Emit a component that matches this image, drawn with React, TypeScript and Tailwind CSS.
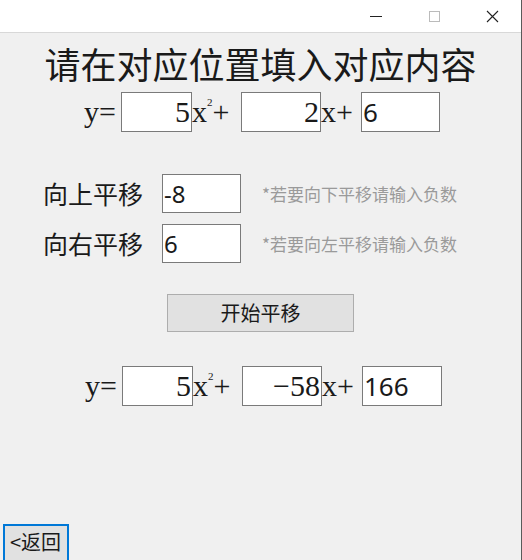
import React from "react";

const serif = "font-['Liberation_Serif',serif]";
const cjk = "font-['Noto_Sans_CJK_SC',sans-serif]";

const Box = ({
  value,
  w,
  h = "h-[40px]",
  align = "left",
  kind = "sans",
}: {
  value: string;
  w: string;
  h?: string;
  align?: "left" | "right";
  kind?: "sans" | "serif";
}) => (
  <div
    className={`${w} ${h} shrink-0 bg-white border border-[#7a7a7a] flex items-center overflow-hidden ${
      align === "right" ? "justify-end pr-[1px]" : "justify-start pl-[1px]"
    } ${
      kind === "serif"
        ? "font-['Liberation_Serif',serif] text-[30px]"
        : "font-['Noto_Sans',sans-serif] text-[26px]"
    } text-[#1a1a1a] leading-none`}
  >
    {value}
  </div>
);

const Equation = ({
  a,
  b,
  c,
  start,
  box3,
}: {
  a: string;
  b: string;
  c: string;
  start: string;
  box3: string;
}) => (
  <div className={`flex items-center h-[40px] ${start} ${serif} text-[30px] text-[#1a1a1a] leading-none`}>
    <span className="w-[37px] shrink-0">y=</span>
    <Box value={a} w="w-[71px]" align="right" kind="serif" />
    <span className="w-[49px] shrink-0 flex items-center">
      <span>x</span>
      <span className="relative -top-[10px] text-[11px] leading-none">2</span>
      <span>+</span>
    </span>
    <Box value={b} w="w-[80px]" align="right" kind="serif" />
    <span className="w-[40px] shrink-0">x+</span>
    <Box value={c} w={box3} />
  </div>
);

const ShiftRow = ({ label, value, hint, mt }: { label: string; value: string; hint: string; mt: string }) => (
  <div className={`flex items-center pl-[43px] ${mt}`}>
    <span className={`w-[119px] shrink-0 ${cjk} text-[25px] text-[#1a1a1a]`}>{label}</span>
    <div className="w-[79px] h-[39px] shrink-0 bg-white border border-[#7a7a7a] flex items-center pl-[1px] font-['Noto_Sans',sans-serif] text-[24px] text-[#1a1a1a]">
      {value}
    </div>
    <span className={`ml-[21px] ${cjk} text-[17px] text-[#9a9a9a]`}>{hint}</span>
  </div>
);

export default function App() {
  return (
    <div className="w-[522px] h-[560px] bg-[#f0f0f0] flex flex-col overflow-hidden border-r border-[#5a5a5a]">
      <div className="h-[33px] shrink-0 bg-white border-b border-[#d8d8d8] flex justify-end">
        <div className="w-[58px] flex items-center justify-center">
          <div className="w-[12px] h-[1px] bg-[#222]" />
        </div>
        <div className="w-[58px] flex items-center justify-center">
          <div className="w-[11px] h-[11px] border border-[#bbb]" />
        </div>
        <div className="w-[58px] flex items-center justify-center">
          <svg width="13" height="13" viewBox="0 0 13 13">
            <path d="M1 1L12 12M12 1L1 12" stroke="#222" strokeWidth="1.1" fill="none" />
          </svg>
        </div>
      </div>

      <div className={`h-[59px] shrink-0 flex items-center justify-center ${cjk} text-[36px] text-[#1a1a1a] leading-none`}>
        请在对应位置填入对应内容
      </div>

      <Equation a="5" b="2" c="6" start="pl-[84px]" box3="w-[79px]" />

      <ShiftRow label="向上平移" value="-8" hint="*若要向下平移请输入负数" mt="mt-[42px]" />
      <ShiftRow label="向右平移" value="6" hint="*若要向左平移请输入负数" mt="mt-[11px]" />

      <div className="mt-[31px] ml-[167px] w-[187px] h-[38px] bg-[#e1e1e1] border border-[#adadad] flex items-center justify-center">
        <span className={`${cjk} text-[20px] text-[#1a1a1a]`}>开始平移</span>
      </div>

      <div className="mt-[34px]">
        <Equation a="5" b="−58" c="166" start="pl-[85px]" box3="w-[80px]" />
      </div>

      <div className="mt-auto ml-[3px] w-[66px] h-[38px] shrink-0 border-2 border-[#0078d7] bg-[#e1e1e1] flex items-start pt-[6px] pl-[5px] translate-y-[2px]">
        <span className={`${cjk} text-[20px] leading-none text-[#1a1a1a]`}>&lt;返回</span>
      </div>
    </div>
  );
}
